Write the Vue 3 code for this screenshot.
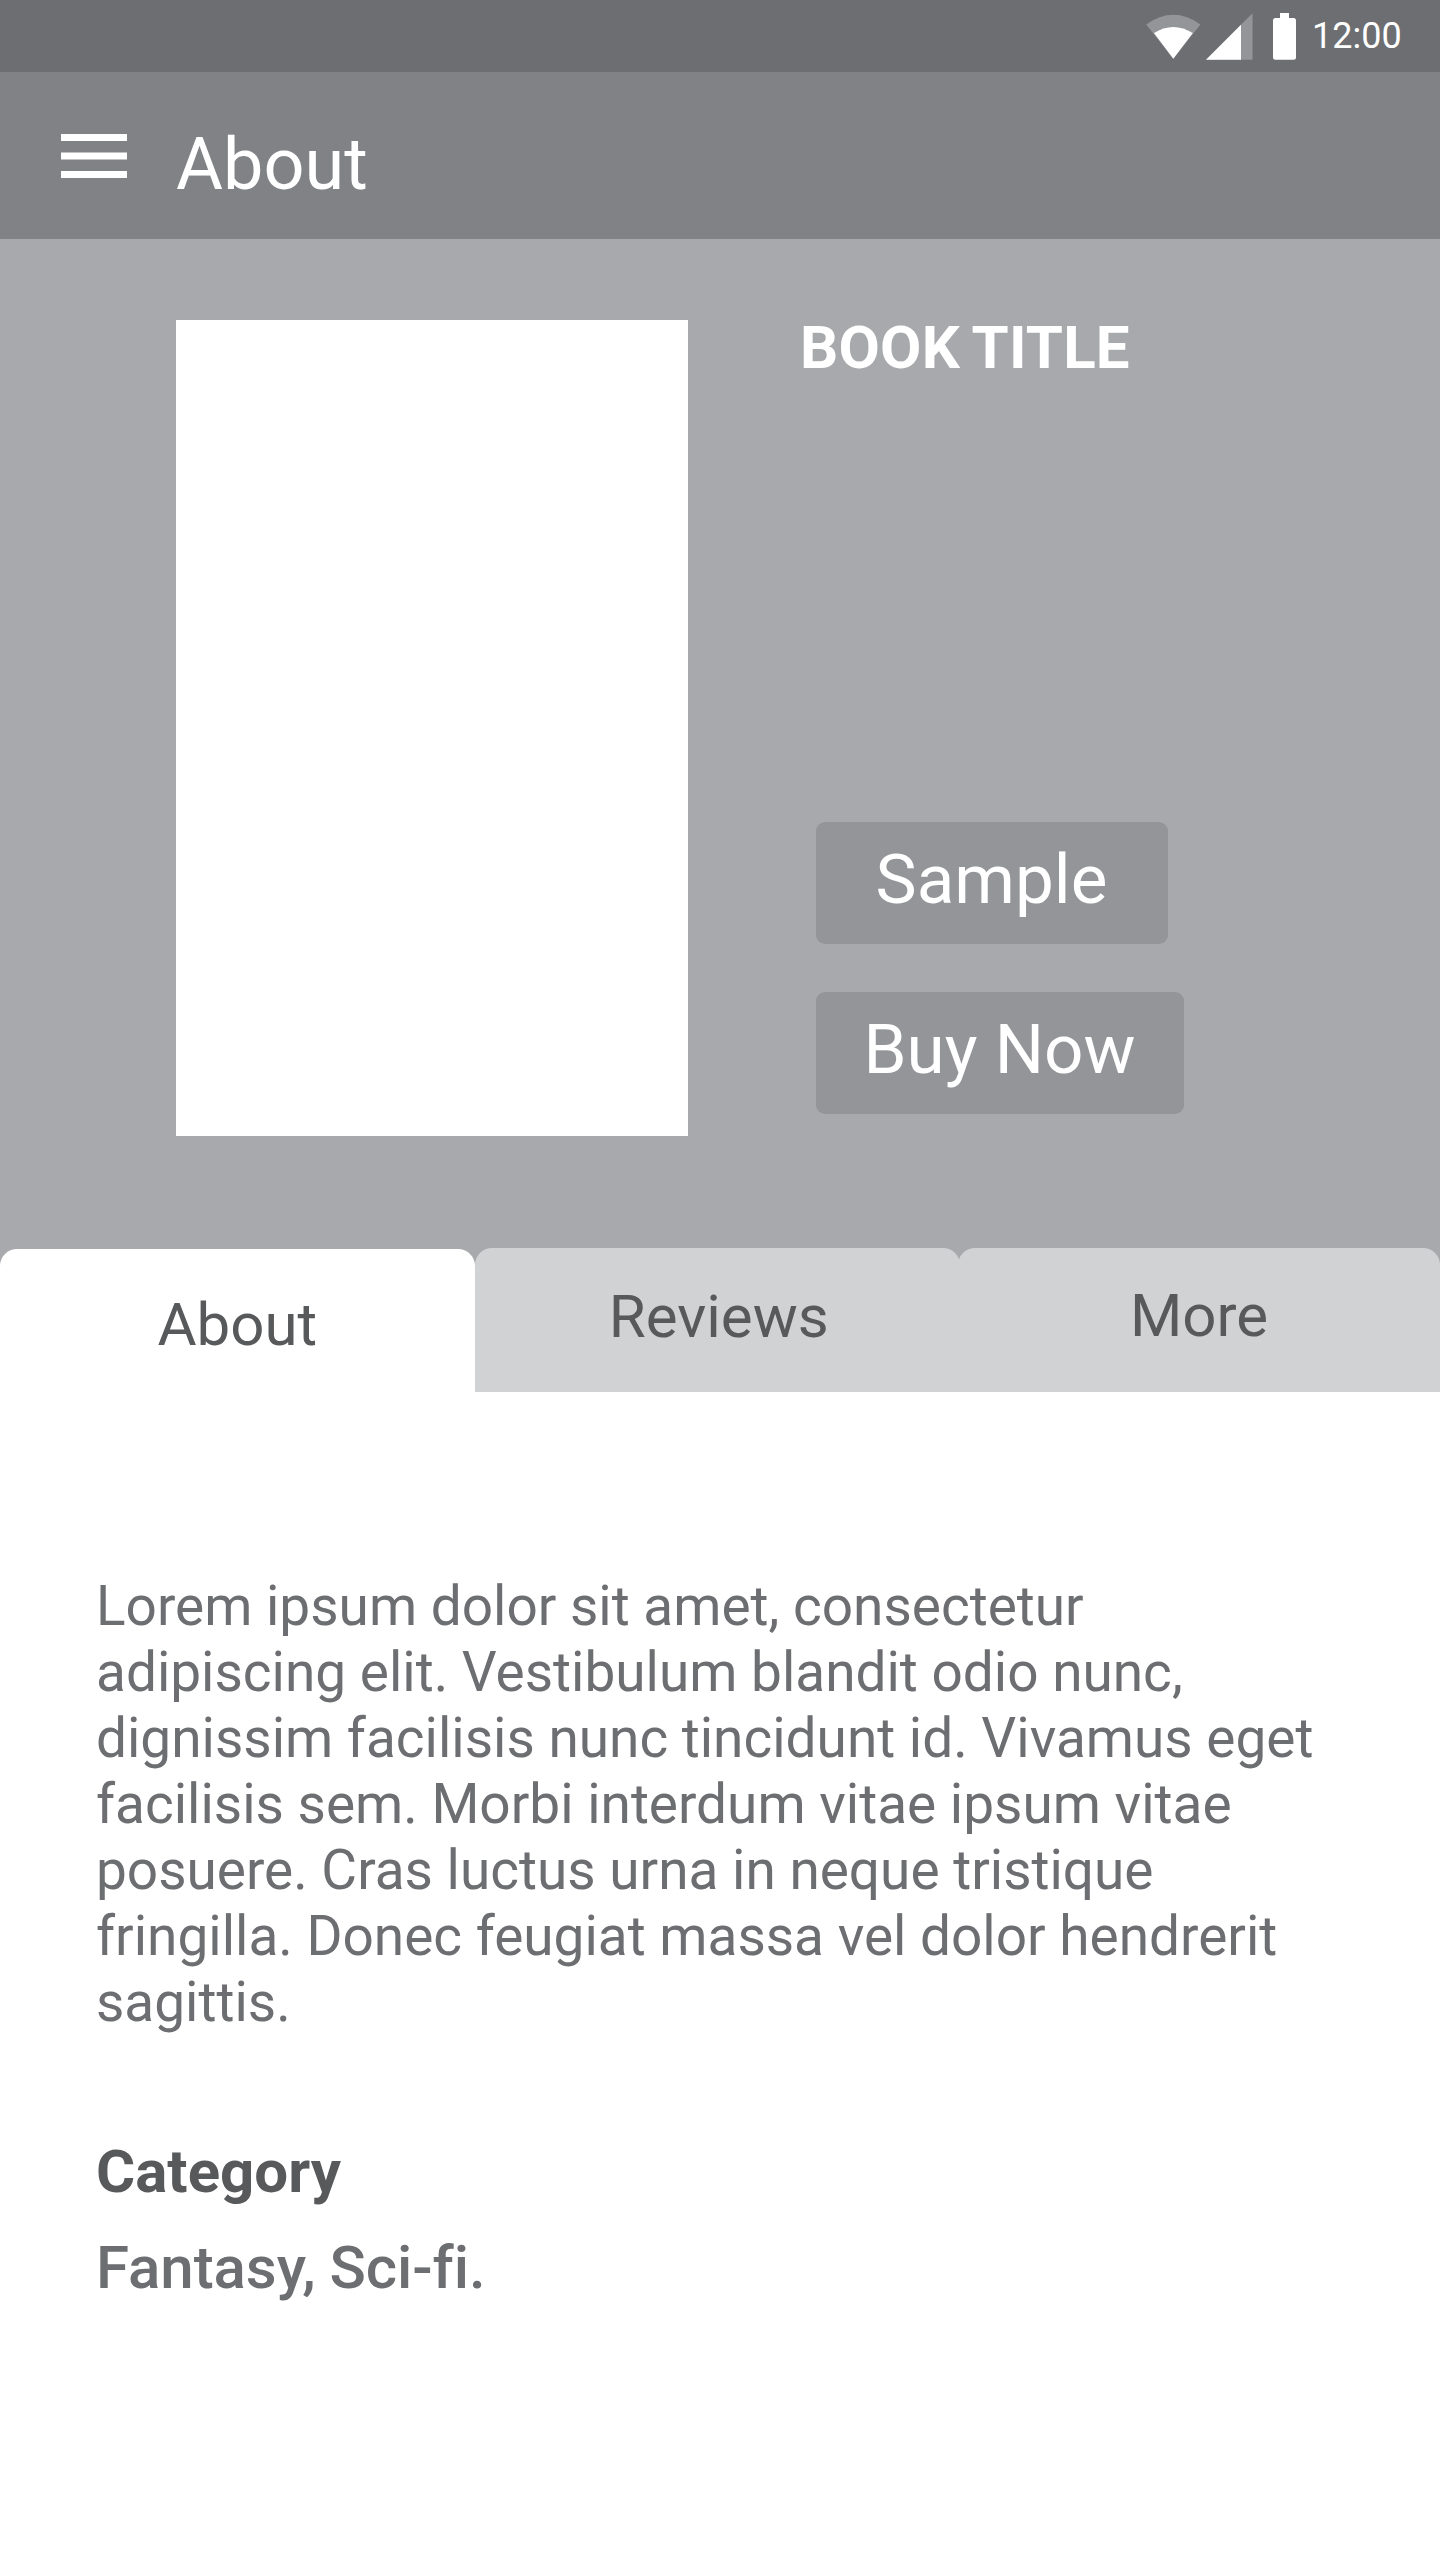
<script setup>
import { ref } from 'vue'

const tabs = ['About', 'Reviews', 'More']
const active = ref('About')
</script>

<template>
  <div class="screen">
    <div class="status-bar">
      <svg class="status-icons" viewBox="0 0 160 72" width="160" height="72" aria-hidden="true">
        <path d="M6.2 24.4Q33.3 5.2 60.4 24.4L33.3 58.7Z" fill="#939598" />
        <path d="M14 33.1Q33.3 20.8 52.8 33.1L33.3 58.7Z" fill="#fff" />
        <path d="M66 59.8L112.5 13.3V59.8Z" fill="#939598" />
        <path d="M66 59.8L101 24.8V59.8Z" fill="#fff" />
        <path d="M140 13H149V18H153.5Q156 18 156 20.5V57.2Q156 59.7 153.5 59.7H135.5Q133 59.7 133 57.2V20.5Q133 18 135.5 18H140Z" fill="#fff" />
      </svg>
      <span class="time">12:00</span>
    </div>

    <header class="app-bar">
      <svg class="menu" viewBox="0 0 66 44" width="66" height="44" aria-hidden="true">
        <path d="M0 0H66V7H0ZM0 18.4H66V25.4H0ZM0 37H66V44H0Z" fill="#fff" />
      </svg>
      <h1>About</h1>
    </header>

    <section class="hero">
      <div class="cover"></div>
      <div class="details">
        <h2>BOOK TITLE</h2>
        <div class="actions">
          <button class="sample">Sample</button>
          <button class="buy">Buy Now</button>
        </div>
      </div>
    </section>

    <nav class="tabs">
      <button
        v-for="tab in tabs"
        :key="tab"
        :class="['tab', tab.toLowerCase(), { active: active === tab }]"
        @click="active = tab"
      >{{ tab }}</button>
    </nav>

    <main class="content">
      <p class="description">
        Lorem ipsum dolor sit amet, consectetur<br />
        adipiscing elit. Vestibulum blandit odio nunc,<br />
        dignissim facilisis nunc tincidunt id. Vivamus eget<br />
        facilisis sem. Morbi interdum vitae ipsum vitae<br />
        posuere. Cras luctus urna in neque tristique<br />
        fringilla. Donec feugiat massa vel dolor hendrerit<br />
        sagittis.
      </p>
      <h3>Category</h3>
      <p class="genres">Fantasy, Sci-fi.</p>
    </main>
  </div>
</template>

<style>
body {
  margin: 0;
}
</style>

<style scoped>
.screen {
  width: 1440px;
  height: 2560px;
  overflow: hidden;
  display: flex;
  flex-direction: column;
  background: #fff;
  font-family: Roboto, sans-serif;
  font-variant-ligatures: none;
}

h1, h2, h3, p {
  margin: 0;
}

button {
  display: block;
  border: 0;
  margin: 0;
  padding: 0;
  font-family: inherit;
  font-weight: 400;
  white-space: nowrap;
}

.status-bar {
  flex: none;
  height: 72px;
  display: flex;
  padding-left: 1140px;
  background: #6d6e71;
}

.time {
  margin-left: 12px;
  color: #fff;
  font-size: 36px;
  line-height: 73px;
}

.app-bar {
  flex: none;
  height: 166.5px;
  display: flex;
  align-items: flex-start;
  background: #808285;
}

.menu {
  margin: 62px 49px 0 61px;
}

.app-bar h1 {
  margin-top: 57px;
  color: #fff;
  font-size: 72px;
  line-height: 72px;
  font-weight: 400;
}

.hero {
  flex: none;
  height: 1009.5px;
  box-sizing: border-box;
  display: flex;
  align-items: flex-start;
  padding: 81.5px 0 0 176px;
  background: #a7a9ac;
}

.cover {
  width: 512px;
  height: 816px;
  background: #fff;
}

.details {
  height: 794px;
  margin-left: 112px;
  display: flex;
  flex-direction: column;
  justify-content: space-between;
}

.details h2 {
  margin-top: -2.5px;
  color: #fff;
  font-size: 60px;
  line-height: 60px;
  font-weight: 700;
  letter-spacing: 0.2px;
  word-spacing: -2px;
}

.actions {
  display: flex;
  flex-direction: column;
  gap: 48px;
  margin-left: 16px;
}

.actions button {
  height: 122px;
  padding: 0 1px 7px 0;
  border-radius: 9px;
  background: #939598;
  color: #fff;
  font-size: 69.2px;
  line-height: 115px;
}

.sample {
  width: 352px;
}

.buy {
  width: 368px;
}

.tabs {
  flex: none;
  height: 144px;
  display: flex;
  background: linear-gradient(#a7a9ac 40px, #fff 40px);
}

.tab {
  height: 144px;
  border-radius: 17px 17px 0 0;
  background: #d1d2d4;
  color: #58595b;
  font-size: 60px;
}

.tab.about {
  width: 474.6px;
}

.tab.reviews {
  width: 485.4px;
  padding: 0 0 7px 3px;
}

.tab.more {
  width: 482px;
  margin-left: -2px;
  padding-bottom: 9px;
}

.tab.active {
  height: 143px;
  margin-top: 1px;
  background: #fff;
  line-height: 151px;
}

.content {
  padding: 181px 96px 0;
}

.description {
  color: #6d6e71;
  font-size: 54.96px;
  line-height: 66px;
  white-space: nowrap;
}

.content h3 {
  margin-top: 106.5px;
  color: #58595b;
  font-size: 60px;
  line-height: 60px;
  font-weight: 700;
}

.genres {
  margin-top: 36px;
  color: #6d6e71;
  font-size: 60px;
  line-height: 60px;
  font-weight: 500;
  letter-spacing: -0.05px;
  word-spacing: -1px;
}
</style>
